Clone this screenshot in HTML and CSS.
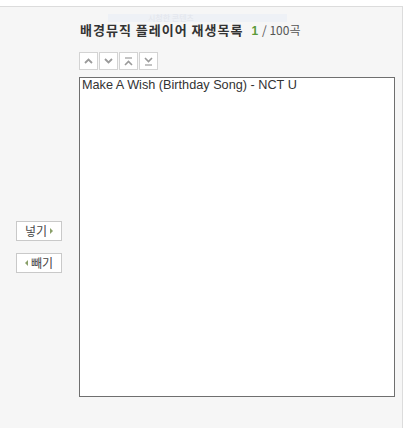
FILE: index.html
```html
<!DOCTYPE html>
<html>

<head>
	<meta charset="UTF-8">
	<title>배경뮤직 플레이어 재생목록</title>
	<link rel="stylesheet" href="styles.css">
</head>

<body>
	<div class="panel">
		<!-- 흐릿한 툴팁 잔상 -->
		<div class="ghost-tip">시청한 콘텐츠</div>

		<div class="side">
			<button class="move-btn" type="button">넣기<span class="arr-right"></span></button>
			<button class="move-btn" type="button"><span class="arr-left"></span>빼기</button>
		</div>

		<div class="main">
			<h3 class="title">배경뮤직 플레이어 재생목록 <span class="count">1</span><span class="total">/ 100곡</span></h3>

			<div class="toolbar">
				<button class="tool-btn" type="button" title="위로">
					<svg width="9" height="6" viewBox="0 0 9 6"><path d="M1 5 L4.5 1.5 L8 5" fill="none" stroke="#9a9a9a" stroke-width="1.8"/></svg>
				</button>
				<button class="tool-btn" type="button" title="아래로">
					<svg width="9" height="6" viewBox="0 0 9 6"><path d="M1 1 L4.5 4.5 L8 1" fill="none" stroke="#9a9a9a" stroke-width="1.8"/></svg>
				</button>
				<button class="tool-btn" type="button" title="맨 위로">
					<svg width="9" height="9" viewBox="0 0 9 9"><path d="M1 1 H8" stroke="#9a9a9a" stroke-width="1.2"/><path d="M1 8 L4.5 4.5 L8 8" fill="none" stroke="#9a9a9a" stroke-width="1.6"/></svg>
				</button>
				<button class="tool-btn" type="button" title="맨 아래로">
					<svg width="9" height="9" viewBox="0 0 9 9"><path d="M1 1 L4.5 4.5 L8 1" fill="none" stroke="#9a9a9a" stroke-width="1.6"/><path d="M1 8 H8" stroke="#9a9a9a" stroke-width="1.2"/></svg>
				</button>
			</div>

			<div class="playlist">
				<div class="song">Make A Wish (Birthday Song) - NCT U</div>
			</div>
		</div>
	</div>
</body>

</html>
```

FILE: styles.css
```css
body {
	margin: 0;
	background: #fff;
	font-family: "Liberation Sans", "Noto Sans CJK KR", sans-serif;
}

.panel {
	position: relative;
	margin-top: 6px;
	width: 403px;
	height: 422px;
	box-sizing: border-box;
	border-top: 1px solid #dcdcdc;
	border-right: 1px solid #dcdcdc;
	background: #f6f6f6;
	display: flex;
}

/* 흐릿한 툴팁 */
.ghost-tip {
	position: absolute;
	left: 108px;
	top: 7px;
	width: 179px;
	height: 8px;
	padding-left: 40px;
	box-sizing: border-box;
	background: #eef1f6;
	color: #e2e5ec;
	font-family: "Noto Sans CJK KR", sans-serif;
	font-size: 8px;
	line-height: 8px;
}

.side {
	width: 79px;
	padding-top: 214px;
	box-sizing: border-box;
	display: flex;
	flex-direction: column;
	align-items: flex-start;
	gap: 12px;
	padding-left: 16px;
}

.move-btn {
	width: 46px;
	height: 20px;
	padding: 0;
	border: 1px solid #c9c9c9;
	background: #fff;
	color: #444;
	font-family: "Noto Sans CJK KR", sans-serif;
	font-size: 12px;
	line-height: 18px;
	display: flex;
	align-items: center;
	justify-content: center;
	gap: 3px;
}

.arr-right,
.arr-left {
	width: 0;
	height: 0;
	border-top: 3px solid transparent;
	border-bottom: 3px solid transparent;
}

.arr-right {
	border-left: 3px solid #8aa06a;
}

.arr-left {
	border-right: 3px solid #8aa06a;
}

.main {
	position: relative;
	display: flex;
	flex-direction: column;
}

.title {
	position: relative;
	margin: 16px 0 0 1px;
	height: 14px;
	font-family: "Noto Sans CJK KR", sans-serif;
	font-size: 13px;
	line-height: 14px;
	letter-spacing: 1px;
	color: #333;
	font-weight: bold;
}

.count {
	margin-left: 4px;
	color: #5a9a3a;
	font-family: "Liberation Sans", sans-serif;
	font-size: 12px;
	letter-spacing: 0;
}

.total {
	margin-left: 4px;
	font-weight: normal;
	color: #555;
	font-size: 12px;
	letter-spacing: 0;
}

.toolbar {
	margin-top: 15px;
	display: flex;
	gap: 1px;
}

.tool-btn {
	flex: none;
	width: 19px;
	height: 18px;
	padding: 0;
	border: 1px solid #d3d3d3;
	background: #fff;
	display: flex;
	align-items: center;
	justify-content: center;
}

.playlist {
	margin-top: 7px;
	width: 316px;
	height: 320px;
	box-sizing: border-box;
	border: 1px solid #6f6f6f;
	background: #fff;
}

.song {
	padding: 0 2px;
	font-size: 12.7px;
	line-height: 14px;
	color: #333;
}
```
